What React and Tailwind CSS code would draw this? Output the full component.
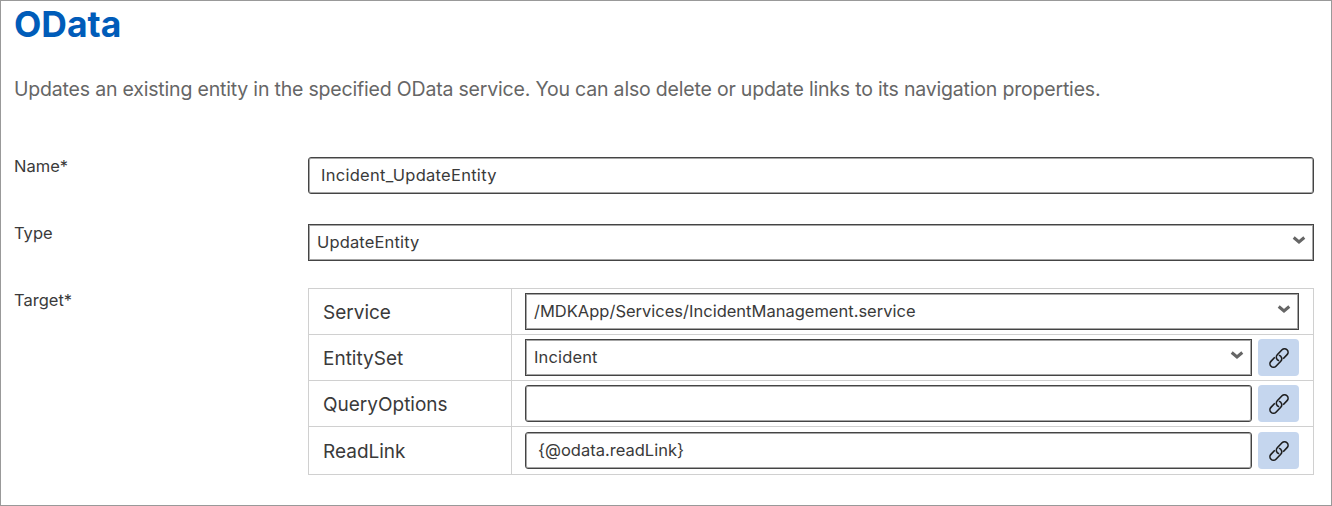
const font = "font-['Inter','Liberation_Sans',sans-serif]";

function Chevron() {
  return (
    <svg className="-mt-1.5 shrink-0" width="14" height="10" viewBox="0 0 14 10" fill="none" stroke="#666" strokeWidth="3" strokeLinecap="butt" strokeLinejoin="miter">
      <path d="M1.7 2.5 7 7 12.3 2.5" />
    </svg>
  );
}

function LinkButton() {
  return (
    <button className="ml-1.5 flex h-[37px] w-[41px] shrink-0 items-center justify-center rounded-[4px] bg-[#c5d6ee]">
      <svg width="24" height="24" viewBox="-12 -12 24 24" fill="none" stroke="#1d1d1d" strokeWidth="1.6" strokeLinecap="butt">
        <g transform="rotate(-46)">
          <path d="M-2.4 -3.5H-8A3.5 3.5 0 0 0 -8 3.5H-1.1A3.5 3.5 0 0 0 1.8 -2" />
          <path d="M2.4 3.5H8A3.5 3.5 0 0 0 8 -3.5H1.1A3.5 3.5 0 0 0 -1.8 2" />
        </g>
      </svg>
    </button>
  );
}

function Select({ value, className }) {
  return (
    <div className={`flex items-center justify-between border border-[#444] pr-[7px] pl-[8px] text-[16.5px] shadow-[inset_0_0_0_1px_#a6a6a6] ${className}`}>
      <span>{value}</span>
      <Chevron />
    </div>
  );
}

function TextField({ value, className }) {
  return (
    <div className={`flex items-center rounded-[3px] border border-[#444] pl-[12px] text-[16.5px] shadow-[inset_0_0_0_1px_#a6a6a6] ${className}`}>
      <span>{value}</span>
    </div>
  );
}

function TargetRow({ label, className, children }) {
  return (
    <div className={`flex border-b border-[#d0d0d0] ${className}`}>
      <div className="flex w-[203px] shrink-0 items-center border-r border-[#d0d0d0] pt-[3px] pl-[14px] text-[19px]">{label}</div>
      <div className="flex grow items-center pr-[14px] pl-[13px]">{children}</div>
    </div>
  );
}

export default function App() {
  return (
    <main className={`h-[506px] w-[1332px] overflow-hidden border border-[#999] bg-white pt-[3px] pr-[17px] pl-[13px] text-[#3a3a3a] ${font}`}>
      <h1 className="h-[42px] text-[35.5px] leading-[42px] font-bold text-[#005cb9]"><span>OData</span></h1>
      <p className="mt-[29px] h-[26px] text-[19.5px] leading-[28px] tracking-[-0.19px] whitespace-nowrap text-[#666]">
        <span>Updates an existing entity in the specified OData service. You can also delete or update links to its navigation properties.</span>
      </p>
      <div className="mt-[56px] flex h-[37px]">
        <label className="w-[294px] shrink-0 text-[16.5px] leading-[18px]"><span>Name*</span></label>
        <TextField value="Incident_UpdateEntity" className="h-[37px] grow tracking-[0.27px]" />
      </div>
      <div className="mt-[30px] flex h-[37px]">
        <label className="w-[294px] shrink-0 text-[16.5px] leading-[18px]"><span>Type</span></label>
        <Select value="UpdateEntity" className="h-[37px] grow tracking-[0.15px]" />
      </div>
      <div className="mt-[27px] flex">
        <label className="w-[294px] shrink-0 pt-[3px] text-[16.5px] leading-[18px]"><span>Target*</span></label>
        <div className="grow border-x border-t border-[#d0d0d0]">
          <TargetRow label="Service" className="h-[46px]"><Select value="/MDKApp/Services/IncidentManagement.service" className="h-[37px] grow" /></TargetRow>
          <TargetRow label="EntitySet" className="h-[46px]"><Select value="Incident" className="h-[37px] grow tracking-[0.15px]" /><LinkButton /></TargetRow>
          <TargetRow label="QueryOptions" className="h-[46px]"><TextField value="" className="h-[37px] grow" /><LinkButton /></TargetRow>
          <TargetRow label="ReadLink" className="h-[48px]"><TextField value="{@odata.readLink}" className="h-[37px] grow" /><LinkButton /></TargetRow>
        </div>
      </div>
    </main>
  );
}
